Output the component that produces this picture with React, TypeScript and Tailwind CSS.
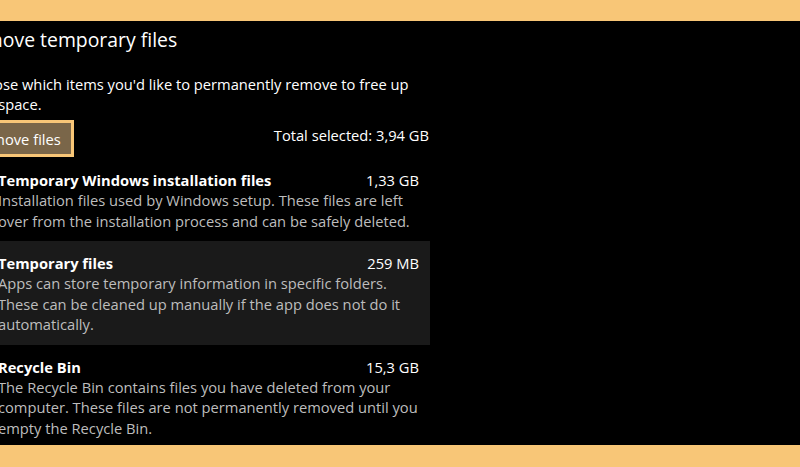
import React from "react";

const items = [
  {
    title: "Temporary Windows installation files",
    size: "1,33 GB",
    desc: "Installation files used by Windows setup.  These files are left over from the installation process and can be safely deleted.",
    active: false,
  },
  {
    title: "Temporary files",
    size: "259 MB",
    desc: "Apps can store temporary information in specific folders. These can be cleaned up manually if the app does not do it automatically.",
    active: true,
  },
  {
    title: "Recycle Bin",
    size: "15,3 GB",
    desc: "The Recycle Bin contains files you have deleted from your computer. These files are not permanently removed until you empty the Recycle Bin.",
    active: false,
  },
];

export default function App() {
  return (
    <div
      className="w-[800px] h-[467px] bg-[#f8c677] pt-[21px] pb-[22px] flex flex-col overflow-hidden"
      style={{ fontFamily: '"Segoe UI", "Open Sans", "Noto Sans", sans-serif' }}
    >
      <div className="flex-1 bg-black overflow-hidden">
        <div className="ml-[-33px] w-[463px]">
          <h1 className="-ml-[5px] text-[19.4px] leading-[28px] text-white pt-[5px]">Remove temporary files</h1>
          <p className="mt-[20px] text-[14.7px] leading-[20px] text-white pr-[20px]">
            Choose which items you'd like to permanently remove to free up disk space.
          </p>
          <div className="mt-[6px] flex items-center justify-between pr-[1px]">
            <button className="-ml-[6px] h-[37px] pl-[10px] pr-[10px] border-[3px] border-[#f8c677] bg-[#7a6649] text-white text-[14.7px] leading-[20px]">
              Remove files
            </button>
            <span className="text-white text-[14.7px] leading-[20px] -mt-[8px]">Total selected: 3,94 GB</span>
          </div>
        </div>
        <div className="mt-[1px] w-[430px] flex flex-col">
          {items.map((it) => (
            <div
              key={it.title}
              className={`pr-[11px] pt-[12px] pb-[10px] ${it.active ? "bg-[#1a1a1a]" : ""}`}
            >
              <div className="-ml-[2px] flex justify-between text-white text-[14.7px] leading-[20px]">
                <span className="font-bold">{it.title}</span>
                <span>{it.size}</span>
              </div>
              <p className="-ml-[2px] text-[#bdbdbd] text-[14.7px] leading-[20.5px]">{it.desc}</p>
            </div>
          ))}
        </div>
      </div>
    </div>
  );
}
